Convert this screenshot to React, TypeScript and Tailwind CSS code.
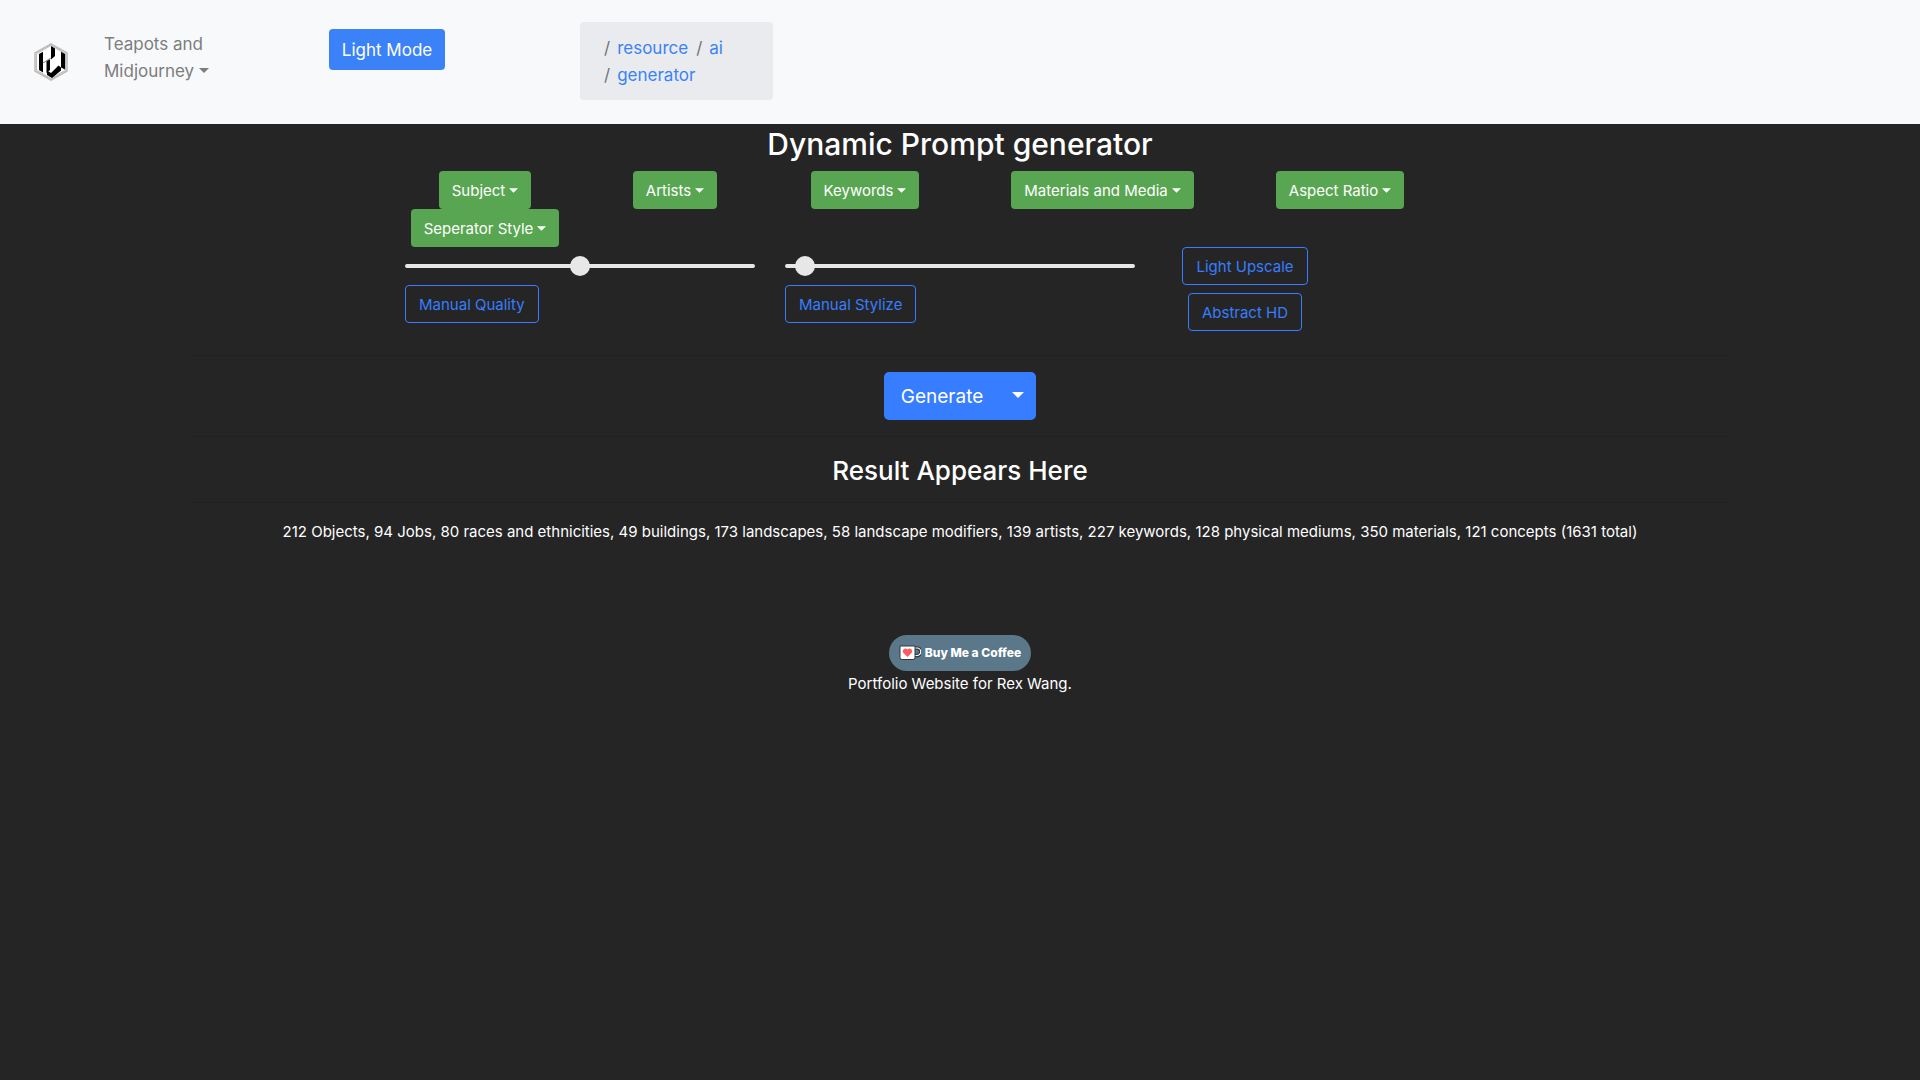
import { useState } from "react";

const stats =
  "212 Objects, 94 Jobs, 80 races and ethnicities, 49 buildings, 173 landscapes, 58 landscape modifiers, 139 artists, 227 keywords, 128 physical mediums, 350 materials, 121 concepts (1631 total)";

const menus = [
  { label: "Subject", span: "col-span-2" },
  { label: "Artists", span: "col-span-2" },
  { label: "Keywords", span: "col-span-2" },
  { label: "Materials and Media", span: "col-span-3" },
  { label: "Aspect Ratio", span: "col-span-2" },
  { label: "Seperator Style", span: "col-span-2" },
];

function Caret({ className = "" }: { className?: string }) {
  return (
    <svg viewBox="0 0 10 5" aria-hidden="true" className={`inline-block shrink-0 fill-current ${className}`}>
      <path d="M0 0h10L5 5z" />
    </svg>
  );
}

function Logo() {
  return (
    <svg viewBox="0 0 34 38" className="h-[38px] w-[34px]" role="img" aria-label="RW">
      <path d="M17 1 33 10v18L17 37 1 28V10z" fill="#fff" stroke="#bdbdbd" strokeWidth="1.6" />
      <path d="M17 2.500 31.500 10.800v16.400L17 35.500 2.500 27.200V10.800z" fill="#fff" stroke="#777" strokeWidth=".5" />
      <path d="M5 11 9 8.800V29.500L5 27z" fill="#000" />
      <path d="M17 3 21 5.500v7.500l-4 3.500z" fill="#000" />
      <path d="M12.500 17.500 16 16v11l-3.500 3z" fill="#000" />
      <path d="M13 27.500 17 30l7.500-7.500 2.500 2v3L18 35l-5-3z" fill="#000" />
      <path d="M27 8.800 31 11v15.500l-4-2z" fill="#000" />
      <path d="M9 19.800 12.500 18M13 17.500 17 15" stroke="#999" strokeWidth="1.200" />
    </svg>
  );
}

function OutlineButton({ children }: { children: string }) {
  return (
    <button
      type="button"
      className="h-[38px] rounded border border-[#377dff] px-[13px] pt-0.5 text-[15px] leading-6 text-[#377dff]"
    >
      {children}
    </button>
  );
}

function Range({ label, initial }: { label: string; initial: number }) {
  const [value, setValue] = useState(initial);
  return (
    <input
      type="range"
      aria-label={label}
      min={0}
      max={1000}
      value={value}
      onChange={(e) => setValue(Number(e.target.value))}
      className="block h-[38px] w-full appearance-none bg-transparent [&::-webkit-slider-runnable-track]:h-1 [&::-webkit-slider-runnable-track]:rounded-full [&::-webkit-slider-runnable-track]:bg-[#e8e7e7] [&::-webkit-slider-thumb]:-mt-2 [&::-webkit-slider-thumb]:size-5 [&::-webkit-slider-thumb]:appearance-none [&::-webkit-slider-thumb]:rounded-full [&::-webkit-slider-thumb]:bg-[#e8e7e7]"
    />
  );
}

function Crumb({ children }: { children: string }) {
  return (
    <li className="flex pl-2">
      <span className="pr-[7px] text-[#6c757d]">/</span>
      <a href="#" className="text-[#3b82f6]">{children}</a>
    </li>
  );
}

export default function App() {
  return (
    <div className="min-h-screen bg-[#252525] font-['Inter',sans-serif] text-[15px] leading-6 text-white">
      <header className="flex items-start bg-[#f8f9fb] px-8 pt-[22px] pb-6 text-[17px] leading-[27px]">
        <a href="#" className="mt-[21px] ml-0.5 shrink-0"><Logo /></a>
        <nav className="mt-[9px] ml-9 w-[225px]">
          <button type="button" className="w-[130px] text-left text-[#7c7d7e]">
            Teapots and Midjourney <Caret className="mb-1 h-[5px] w-2.5" />
          </button>
        </nav>
        <button type="button" className="mt-[7px] h-[41px] w-[116px] rounded bg-[#3b82f8] pt-0.5 text-white">
          Light Mode
        </button>
        <nav aria-label="breadcrumb" className="ml-[135px] w-[193px] rounded bg-[#e9ebef] px-4 pt-[13px] pb-[11px]">
          <ol className="flex flex-wrap">
            <Crumb>resource</Crumb>
            <Crumb>ai</Crumb>
            <Crumb>generator</Crumb>
          </ol>
        </nav>
      </header>

      <main className="text-center">
        <h1 className="pb-1.5 text-[30px] leading-[41px] font-medium">Dynamic Prompt generator</h1>

        <div className="mx-auto max-w-[1140px]">
          <div className="grid grid-cols-12">
            {menus.map((m) => (
              <div key={m.label} className={m.span}>
                <button
                  type="button"
                  className="inline-flex h-[38px] items-center gap-1 rounded bg-[#59a652] px-[13px] text-[15px] leading-6"
                >
                  <span className="pt-0.5">{m.label}</span>
                  <Caret className="h-[5px] w-[9px]" />
                </button>
              </div>
            ))}
          </div>

          <div className="grid grid-cols-12 pb-2">
            <div className="col-span-4 px-[15px] text-left">
              <Range label="Quality" initial={500} />
              <OutlineButton>Manual Quality</OutlineButton>
            </div>
            <div className="col-span-4 px-[15px] text-left">
              <Range label="Stylize" initial={30} />
              <OutlineButton>Manual Stylize</OutlineButton>
            </div>
            <div className="col-span-2 flex flex-col items-center gap-2">
              <OutlineButton>Light Upscale</OutlineButton>
              <OutlineButton>Abstract HD</OutlineButton>
            </div>
          </div>
        </div>

        <div className="mx-auto w-4/5">
          <hr className="my-4 border-[#212121]" />
          <div className="flex justify-center">
            <button type="button" className="h-12 rounded-l-[5px] bg-[#377dff] px-[17px] pt-0.5 text-[19px]">
              Generate
            </button>
            <button
              type="button"
              aria-label="More generate options"
              className="flex h-12 items-center rounded-r-[5px] bg-[#377dff] px-3"
            >
              <Caret className="mb-0.5 h-1.5 w-3" />
            </button>
          </div>
          <hr className="my-4 border-[#212121]" />
          <h2 className="pt-0.5 text-[26px] leading-[31px] font-medium">Result Appears Here</h2>
          <hr className="my-4 border-[#212121]" />
          <p className="leading-[26px]">{stats}</p>
        </div>
      </main>

      <footer className="mt-[90px] pb-10 text-center">
        <a
          href="#"
          className="mx-auto flex h-9 w-[142px] items-center justify-center gap-1 rounded-full bg-[#5a788a] text-[12px] font-extrabold"
        >
          <svg viewBox="0 0 22 16" className="h-4 w-[22px]" aria-hidden="true">
            <path d="M16 3h2a3.500 3.500 0 0 1 0 7.500h-2" fill="none" stroke="#323842" strokeWidth="3.500" />
            <path d="M16 3h2a3.500 3.500 0 0 1 0 7.500h-2" fill="none" stroke="#fff" strokeWidth="1.200" />
            <path d="M1 1h15v11.500a2 2 0 0 1-2 2H3a2 2 0 0 1-2-2z" fill="#fff" stroke="#323842" />
            <path d="M8.500 12 4.500 8a2.500 2.500 0 0 1 4-3.500 2.500 2.500 0 0 1 4 3.500z" fill="#ff5a5f" />
          </svg>
          Buy Me a Coffee
        </a>
        <p className="leading-[26px]">Portfolio Website for Rex Wang.</p>
      </footer>
    </div>
  );
}
